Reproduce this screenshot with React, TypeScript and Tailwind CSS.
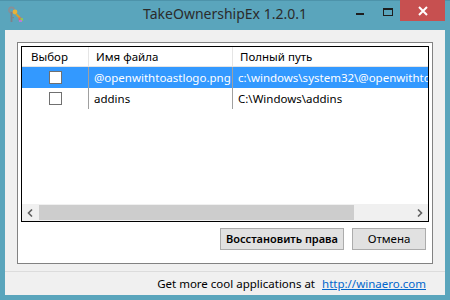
import React from "react";

const font = { fontFamily: '"Noto Sans", "Open Sans", sans-serif' };

function AppIcon() {
  return (
    <svg width="18" height="18" viewBox="0 0 18 18">
      <circle cx="4.5" cy="4" r="2.6" fill="none" stroke="#8a8f96" strokeWidth="1.6" />
      <rect x="3.6" y="6" width="1.8" height="10" fill="#7d838a" />
      <rect x="5.4" y="11" width="1.6" height="1.2" fill="#7d838a" />
      <circle cx="8" cy="6" r="2.4" fill="#e6b23a" />
      <path d="M9 8 L13 12" stroke="#d9a02c" strokeWidth="2" />
      <rect x="11.5" y="11.5" width="3" height="3" fill="#e06a5b" />
      <rect x="13.5" y="12" width="2.5" height="3" fill="#8fc45a" />
      <rect x="12" y="14" width="3" height="2" fill="#b57ed6" />
    </svg>
  );
}

function Checkbox() {
  return <div className="w-[13px] h-[13px] border border-[#707070] bg-white" />;
}

export default function App() {
  return (
    <div className="w-[450px] h-[300px] bg-[#5aa5bc] flex flex-col overflow-hidden" style={font}>
      <div className="h-[30px] relative flex items-center justify-center shrink-0 border-t border-[#4d93aa]">
        <div className="absolute left-[7px] top-[5px]">
          <AppIcon />
        </div>
        <span className="text-[14px] text-[#2b2b2b] leading-none -mt-[3px]">TakeOwnershipEx 1.2.0.1</span>
        <div className="absolute left-[356px] top-[12px] w-[8px] h-[2px] bg-[#1e1e1e]" />
        <div className="absolute left-[383px] top-[7px] w-[10px] h-[8px] border border-t-2 border-[#1e1e1e]" />
        <div className="absolute left-[400px] top-[-1px] w-[45px] h-[21px] bg-[#c75050] flex items-center justify-center">
          <svg width="10" height="10" viewBox="0 0 10 10">
            <path d="M1 1 L9 9 M9 1 L1 9" stroke="white" strokeWidth="2" />
          </svg>
        </div>
      </div>
      <div className="mx-[5px] mb-[5px] flex-1 bg-[#f0f0f0] flex flex-col">
        <div className="mt-[12px] mx-[12px] h-[222px] border border-[#828282] bg-white p-[3px] flex flex-col">
          <div className="h-[176px] border border-black flex flex-col text-[11.5px] text-black">
            <div className="h-[20px] flex items-center border-b border-[#e5e5e5] bg-white">
              <div className="w-[67px] h-full border-r border-[#e5e5e5] pl-[9px] flex items-center">Выбор</div>
              <div className="w-[144px] h-full border-r border-[#e5e5e5] pl-[7px] flex items-center">Имя файла</div>
              <div className="flex-1 pl-[7px] flex items-center">Полный путь</div>
            </div>
            <div className="h-[21px] flex items-center bg-[#3399ff] text-white whitespace-nowrap overflow-hidden">
              <div className="w-[67px] h-full border-r border-[#a0a0a0] flex items-center justify-center pl-[1px]">
                <Checkbox />
              </div>
              <div className="w-[144px] h-full border-r border-[#a0a0a0] pl-[5px] flex items-center overflow-hidden">@openwithtoastlogo.png</div>
              <div className="flex-1 h-full pl-[5px] flex items-center overflow-hidden">c:\windows\system32\@openwithtoastlogo.png</div>
            </div>
            <div className="h-[21px] flex items-center whitespace-nowrap overflow-hidden">
              <div className="w-[67px] h-full border-r border-[#a0a0a0] flex items-center justify-center pl-[1px]">
                <Checkbox />
              </div>
              <div className="w-[144px] h-full border-r border-[#a0a0a0] pl-[5px] flex items-center">addins</div>
              <div className="flex-1 h-full pl-[5px] flex items-center">C:\Windows\addins</div>
            </div>
            <div className="flex-1" />
            <div className="h-[17px] bg-[#f0f0f0] flex items-center">
              <div className="w-[17px] h-full flex items-center justify-center">
                <svg width="7" height="8" viewBox="0 0 7 8">
                  <path d="M5 0.5 L1.5 4 L5 7.5" stroke="#606060" strokeWidth="1.6" fill="none" />
                </svg>
              </div>
              <div className="w-[315px] h-[15px] bg-[#cdcdcd]" />
              <div className="flex-1" />
              <div className="w-[17px] h-full flex items-center justify-center">
                <svg width="7" height="8" viewBox="0 0 7 8">
                  <path d="M2 0.5 L5.5 4 L2 7.5" stroke="#606060" strokeWidth="1.6" fill="none" />
                </svg>
              </div>
            </div>
          </div>
          <div className="flex justify-end gap-[8px] mt-[6px] pr-[3px] text-[11.5px] whitespace-nowrap">
            <div className="w-[124px] h-[22px] border border-[#acacac] bg-[#e1e1e1] flex items-center justify-center font-semibold text-[11px] text-black">
              Восстановить права
            </div>
            <div className="w-[74px] h-[22px] border border-[#acacac] bg-[#e1e1e1] flex items-center justify-center text-black">
              Отмена
            </div>
          </div>
        </div>
        <div className="mt-[7px] border-t border-[#dcdcdc] flex-1 flex items-center justify-end pr-[19px] text-[11.5px] text-black whitespace-nowrap">
          <span>Get more cool applications at</span>
          <span className="ml-[7px] text-[#0066cc] underline">http://winaero.com</span>
        </div>
      </div>
    </div>
  );
}
